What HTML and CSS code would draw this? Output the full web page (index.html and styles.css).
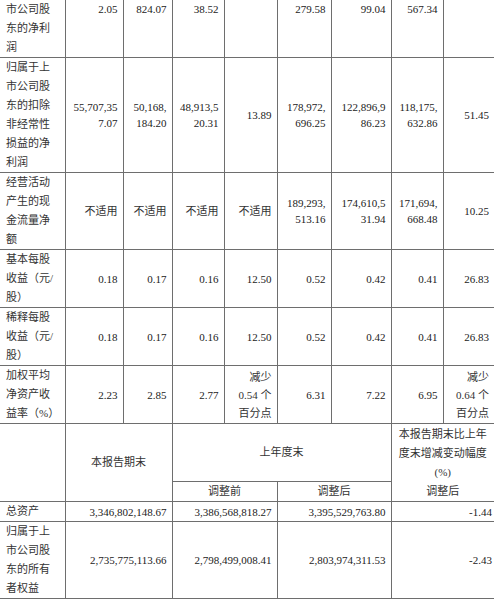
FILE: index.html
```html
<!DOCTYPE html>
<html lang="zh-CN">
<head>
<meta charset="utf-8">
<title>主要会计数据</title>
<link rel="stylesheet" href="styles.css">
</head>
<body>
<table class="fin">
  <colgroup>
    <col class="w65"><col class="w58"><col class="w49"><col class="w52"><col class="w53"><col class="w54"><col class="w60"><col class="w52"><col class="w51">
  </colgroup>
  <tbody>
    <tr class="first">
      <td class="lbl">市公司股<br>东的净利<br>润</td>
      <td class="num top">2.05</td>
      <td class="num top">824.07</td>
      <td class="num top">38.52</td>
      <td class="num top"></td>
      <td class="num top">279.58</td>
      <td class="num top">99.04</td>
      <td class="num top">567.34</td>
      <td class="num top last"></td>
    </tr>
    <tr>
      <td class="lbl">归属于上<br>市公司股<br>东的扣除<br>非经常性<br>损益的净<br>利润</td>
      <td class="num">55,707,35<br>7.07</td>
      <td class="num">50,168,<br>184.20</td>
      <td class="num">48,913,5<br>20.31</td>
      <td class="num">13.89</td>
      <td class="num">178,972,<br>696.25</td>
      <td class="num">122,896,9<br>86.23</td>
      <td class="num">118,175,<br>632.86</td>
      <td class="num last">51.45</td>
    </tr>
    <tr>
      <td class="lbl">经营活动<br>产生的现<br>金流量净<br>额</td>
      <td class="num cjk">不适用</td>
      <td class="num cjk">不适用</td>
      <td class="num cjk">不适用</td>
      <td class="num cjk">不适用</td>
      <td class="num">189,293,<br>513.16</td>
      <td class="num">174,610,5<br>31.94</td>
      <td class="num">171,694,<br>668.48</td>
      <td class="num last">10.25</td>
    </tr>
    <tr>
      <td class="lbl">基本每股<br>收益（元/<br>股）</td>
      <td class="num">0.18</td>
      <td class="num">0.17</td>
      <td class="num">0.16</td>
      <td class="num">12.50</td>
      <td class="num">0.52</td>
      <td class="num">0.42</td>
      <td class="num">0.41</td>
      <td class="num last">26.83</td>
    </tr>
    <tr>
      <td class="lbl">稀释每股<br>收益（元/<br>股）</td>
      <td class="num">0.18</td>
      <td class="num">0.17</td>
      <td class="num">0.16</td>
      <td class="num">12.50</td>
      <td class="num">0.52</td>
      <td class="num">0.42</td>
      <td class="num">0.41</td>
      <td class="num last">26.83</td>
    </tr>
    <tr>
      <td class="lbl">加权平均<br>净资产收<br>益率（%）</td>
      <td class="num">2.23</td>
      <td class="num">2.85</td>
      <td class="num">2.77</td>
      <td class="num cjk">减少<br>0.54 个<br>百分点</td>
      <td class="num">6.31</td>
      <td class="num">7.22</td>
      <td class="num">6.95</td>
      <td class="num cjk last">减少<br>0.64 个<br>百分点</td>
    </tr>
    <tr>
      <td class="lbl" rowspan="2"></td>
      <td class="ctr" colspan="2" rowspan="2">本报告期末</td>
      <td class="ctr tall" colspan="4">上年度末</td>
      <td class="ctr last" colspan="2" rowspan="2">本报告期末比上年<br>度末增减变动幅度<br>(%)<br>调整后</td>
    </tr>
    <tr>
      <td class="ctr" colspan="2">调整前</td>
      <td class="ctr" colspan="2">调整后</td>
    </tr>
    <tr>
      <td class="lbl">总资产</td>
      <td class="num" colspan="2">3,346,802,148.67</td>
      <td class="num" colspan="2">3,386,568,818.27</td>
      <td class="num" colspan="2">3,395,529,763.80</td>
      <td class="num edge last" colspan="2">-1.44</td>
    </tr>
    <tr>
      <td class="lbl">归属于上<br>市公司股<br>东的所有<br>者权益</td>
      <td class="num" colspan="2">2,735,775,113.66</td>
      <td class="num" colspan="2">2,798,499,008.41</td>
      <td class="num" colspan="2">2,803,974,311.53</td>
      <td class="num edge last" colspan="2">-2.43</td>
    </tr>
  </tbody>
</table>
</body>
</html>
```

FILE: styles.css
```css
html, body {
  margin: 0;
  padding: 0;
  background: #ffffff;
}

body {
  font-family: "Liberation Serif", "Noto Sans CJK SC", serif;
  font-size: 11px;
  color: #222222;
}

.fin {
  border-collapse: collapse;
  table-layout: fixed;
  width: 494px;
}

.w65 { width: 65px; }
.w58 { width: 58px; }
.w49 { width: 49px; }
.w52 { width: 52px; }
.w53 { width: 53px; }
.w54 { width: 54px; }
.w60 { width: 60px; }
.w51 { width: 51px; }

.fin td {
  border: 1px solid #6e6e6e;
  padding: 0 6px;
  line-height: 19px;
  white-space: nowrap;
  vertical-align: middle;
  overflow: hidden;
}

.fin .first td {
  border-top: 0;
}

.fin td.lbl {
  border-left: 0;
  text-align: left;
  color: #333333;
}

.fin td.last {
  border-right: 0;
}

.fin td.num {
  text-align: right;
  padding-right: 5px;
  padding-left: 2px;
  line-height: 16px;
}

.fin td.num.top {
  vertical-align: top;
  line-height: 19px;
}

.fin td.num.cjk {
  line-height: 18px;
  color: #333333;
}

.fin td.ctr {
  text-align: center;
  color: #333333;
}

.fin td.tall {
  padding-top: 19px;
  padding-bottom: 19px;
}

.fin td.num.edge {
  padding-right: 2px;
}
```
